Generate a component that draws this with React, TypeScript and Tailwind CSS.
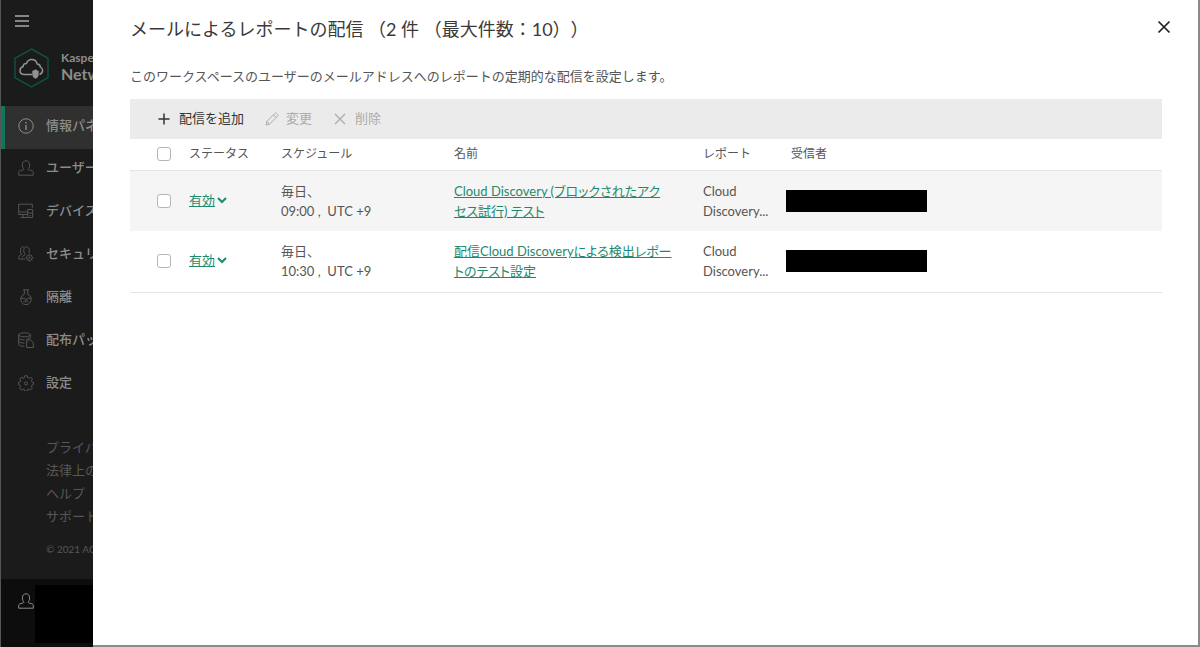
import { useState } from 'react';
import type { ReactNode } from 'react';

type MenuItem = {
  label: string;
  icon: ReactNode;
};

type Delivery = {
  id: number;
  time: string;
  name: string;
  report: string;
};

const menu: MenuItem[] = [
  {
    label: '情報パネル',
    icon: (
      <>
        <circle cx="8" cy="8" r="7.2" />
        <path d="M8 7v5M8 4v1.4" strokeWidth="1.4" />
      </>
    ),
  },
  { label: 'ユーザー', icon: <UserPath /> },
  {
    label: 'デバイス',
    icon: <path d="M9 11.5H.7V1.2h13.6v3.6M.7 9H9M5 11.5v3M2.5 14.5H9M9.7 6.5h5v8h-5zM9.7 10h5M12.2 12v1" />,
  },
  {
    label: 'セキュリティ',
    icon: (
      <>
        <path d="M7 13H.7c0-2.400.4-3.400 1.800-4l1.200-.6C2.600 7.300 2.200 5.200 2.600 3.500 3 1.800 3.900.8 5.200.8c.5 0 .9.1 1.300.4M6.200 9.300 7 8.700V8C5.900 7 5.500 5 5.900 3.400 6.300 1.700 7.300.8 8.600.8s2.200.9 2.600 2.600c.3 1.200.1 2.500-.4 3.500M6.200 9.300c-1.200.4-1.700 1-1.700 2.200" />
        <circle cx="11.500" cy="11.700" r="2.800" />
        <circle cx="11.500" cy="11.700" r=".7" />
        <path d="M11.500 7.700v1M11.500 14.700v1M7.500 11.700h1M14.500 11.700h1M8.700 8.900l.7.7M13.600 13.800l.7.7M14.300 8.900l-.7.7M8.700 14.500l.7-.7" />
      </>
    ),
  },
  {
    label: '隔離',
    icon: (
      <>
        <path d="M5 .8h6M6.300.8v4.500a5.300 5.300 0 1 0 3.400 0V.8M2.800 9.200h3.400l1.800 1.500 1.800-1.500h3.400" />
        <path d="M8 10.700v3M5.500 13l1.200-1.500M10.500 13l-1.200-1.500" />
      </>
    ),
  },
  {
    label: '配布パッケージ',
    icon: (
      <>
        <ellipse cx="6.500" cy="2.800" rx="5.800" ry="2" />
        <path d="M.7 2.800v9.600c0 1 2.300 1.900 5.800 1.900M12.300 2.800v3.400M.7 6c0 1.100 2.600 1.900 5.800 1.900M.7 9.200c0 1.100 2.600 1.900 5.800 1.900M12.300 5.500c-.5.800-2 1.400-4 1.600" />
        <path d="M8.700 8h4l2.600 2.500v5H8.700z" />
      </>
    ),
  },
  {
    label: '設定',
    icon: (
      <>
        <path d="M6.700.8h2.600l.4 1.900 1.300.6 1.700-1.100 1.800 1.900-1.100 1.600.5 1.300 1.500.3v2.500l-1.700.5-.5 1.200 1.100 1.700-1.900 1.900-1.600-1.100-1.200.5-.4 1.700H6.700l-.4-1.700-1.300-.5-1.600 1.100-1.800-1.900 1-1.600-.5-1.300L.6 9.800V7.300l1.600-.4.5-1.200-1-1.700 1.800-1.800L5 3.200l1.300-.5z" />
        <circle cx="8" cy="8.500" r="1.500" />
      </>
    ),
  },
];

const links = ['プライバシー', '法律上の情報', 'ヘルプ', 'サポート'];

const deliveries: Delivery[] = [
  { id: 1, time: '09:00 ,  UTC +9', name: 'Cloud Discovery (ブロックされたアク\nセス試行) テスト', report: 'Cloud Discovery...' },
  { id: 2, time: '10:30 ,  UTC +9', name: '配信Cloud Discoveryによる検出レポー\nトのテスト設定', report: 'Cloud Discovery...' },
];

function UserPath() {
  return (
    <path d="M6 9.200C4.900 8.200 4.400 6.600 4.400 4.900 4.400 2.300 5.900.8 8 .8s3.600 1.500 3.600 4.100c0 1.700-.5 3.300-1.600 4.300.3.600.8.8 1.600 1l2.200.5c1.100.3 1.500 1 1.500 2v2.500H.7v-2.500c0-1 .4-1.700 1.500-2l2.200-.5c.8-.2 1.300-.4 1.600-1z" />
  );
}

function Icon({ children, className }: { children: ReactNode; className?: string }) {
  return (
    <svg viewBox="0 0 16 16" fill="none" stroke="currentColor" className={`size-4 shrink-0 ${className ?? ''}`}>
      {children}
    </svg>
  );
}

function Sidebar() {
  return (
    <aside className="flex w-[93px] shrink-0 flex-col overflow-hidden whitespace-nowrap border-l border-[#555] bg-[#1b1b1b] text-[#8c8c8c]">
      <button aria-label="メニュー" className="mt-[15px] ml-[14px] flex h-3 w-[14px] flex-col justify-between">
        <span className="h-[2px] w-full bg-[#858585]" />
        <span className="h-[2px] w-full bg-[#858585]" />
        <span className="h-[2px] w-full bg-[#858585]" />
      </button>

      <div className="mt-[21px] mb-[18px] ml-[13px] flex h-10 items-center gap-3">
        <svg viewBox="0 0 35 40" fill="none" className="h-10 w-[35px] shrink-0">
          <path d="M17.500 1 34 10.300v19.400L17.500 39 1 29.700V10.300z" stroke="#0c5144" strokeWidth="1.500" />
          <path
            d="M18 26.500h-7.500C7.700 26.500 6 24.800 6 22.500c0-2 1.300-3.500 3.200-4-.1-2 1.400-3.300 3.300-3.100.7-2.600 2.700-4 5.200-4 2.900 0 4.900 1.700 5.400 4.500 2 .1 3.200 1.300 3.200 3.200 1.500.6 2.300 1.700 2.300 3.200 0 2-1.200 3.600-3.100 4.100"
            stroke="#929292"
            strokeWidth="1.500"
          />
          <path d="M18.300 23c1.200-.3 2.200-.9 3.200-1.800 1 .9 2 1.500 3.200 1.800v3.200c0 2-1.200 3.600-3.200 4.600-2-1-3.200-2.600-3.200-4.600z" fill="#929292" />
        </svg>
        <div className="pb-1 font-['Lato'] font-bold">
          <div className="text-xs leading-4">Kaspersky</div>
          <div className="text-base leading-4">Network</div>
        </div>
      </div>

      <nav>
        {menu.map((item, i) => (
          <a
            key={item.label}
            href="#"
            className={`flex h-[43px] items-center gap-3 border-l-4 pl-[13px] text-[13px] font-medium ${
              i === 0 ? 'border-[#12765f] bg-[#303030] pb-1' : 'border-transparent pb-[6px]'
            }`}
          >
            <Icon className={i === 0 ? 'text-[#8c8c8c]' : 'text-[#555]'}>{item.icon}</Icon>
            {item.label}
          </a>
        ))}
      </nav>

      <div className="mt-[29px] ml-[45px] flex flex-col text-[13px] leading-[23px] text-[#585858]">
        {links.map((l) => (
          <a key={l} href="#">{l}</a>
        ))}
        <span className="mt-[10px] font-['Lato'] text-[10px]">© 2021 AO Kaspersky Lab</span>
      </div>

      <div className="mt-auto flex h-[68px] bg-[#0d0d0d] pt-[6px] pl-[17px]">
        <Icon className="mt-2 mr-px text-[#8c8c8c]">
          <UserPath />
        </Icon>
        <div className="h-[58px] flex-1 bg-black" />
      </div>
    </aside>
  );
}

function Checkbox({ label, checked, onChange }: { label: string; checked: boolean; onChange: () => void }) {
  return (
    <input
      type="checkbox"
      aria-label={label}
      checked={checked}
      onChange={onChange}
      className="ml-[27px] block size-[14px] appearance-none rounded-[3px] border border-[#b5b5b5] bg-white checked:bg-[#1d8a6e]"
    />
  );
}

export default function App() {
  const [selected, setSelected] = useState<number[]>([]);

  const toggle = (id: number) => {
    setSelected(selected.includes(id) ? selected.filter((s) => s !== id) : [...selected, id]);
  };

  const toggleAll = () => {
    setSelected(selected.length === deliveries.length ? [] : deliveries.map((d) => d.id));
  };

  return (
    <div className="flex min-h-screen font-['Lato','Noto_Sans_CJK_JP',sans-serif]">
      <Sidebar />

      <main className="min-w-0 flex-1 border-r-2 border-b-2 border-[#8a8a8a] bg-white pr-9 pl-[37px] text-[#555]">
        <header className="-mr-[10px] flex items-start justify-between pt-[15px]">
          <h1 className="text-lg leading-7 text-[#3a3a3a] [text-spacing-trim:space-all]">
            メールによるレポートの配信 （2 件 （最大件数：10））
          </h1>
          <button aria-label="閉じる" className="pt-1 text-[#222]">
            <Icon>
              <path d="M2.500 2.500l11 11M13.500 2.500l-11 11" strokeWidth="1.700" />
            </Icon>
          </button>
        </header>

        <p className="mt-[23px] text-[13px] leading-5">
          このワークスペースのユーザーのメールアドレスへのレポートの定期的な配信を設定します。
        </p>

        <div className="mt-[13px] flex h-10 items-center bg-[#ebebeb] pl-[26px] text-[13px] text-[#333]">
          <button className="mr-5 flex items-center gap-[7px]">
            <Icon>
              <path d="M8 2.500v11M2.500 8h11" strokeWidth="1.500" />
            </Icon>
            配信を追加
          </button>
          <button disabled={selected.length !== 1} className="mr-5 flex items-center gap-[6px] disabled:text-[#acacac]">
            <Icon>
              <path d="M2 14l.8-3.500 8-8c.6-.6 1.300-.6 1.900 0l.8.8c.6.6.6 1.300 0 1.900l-8 8zM9.500 3.800l2.700 2.700M2.800 10.500l2.700 2.700" />
            </Icon>
            変更
          </button>
          <button disabled={selected.length === 0} className="flex items-center gap-[7px] disabled:text-[#acacac]">
            <Icon>
              <path d="M3 3l10 10M13 3L3 13" strokeWidth="1.300" />
            </Icon>
            削除
          </button>
        </div>

        <table className="w-full table-fixed text-left text-[13px] leading-5">
          <colgroup>
            <col className="w-[59px]" />
            <col className="w-[92px]" />
            <col className="w-[173px]" />
            <col className="w-[249px]" />
            <col className="w-[83px]" />
            <col />
          </colgroup>
          <thead>
            <tr className="h-[31px] border-b border-[#e0e5e8] text-xs">
              <th>
                <Checkbox label="すべて選択" checked={selected.length === deliveries.length} onChange={toggleAll} />
              </th>
              <th className="font-normal">ステータス</th>
              <th className="font-normal">スケジュール</th>
              <th className="font-normal">名前</th>
              <th className="font-normal">レポート</th>
              <th className="pl-[5px] font-normal">受信者</th>
            </tr>
          </thead>
          <tbody>
            {deliveries.map((d) => (
              <tr key={d.id} className="h-[61px] border-[#e0e5e8] odd:bg-[#f5f5f5] last:border-b">
                <td>
                  <Checkbox label={d.name} checked={selected.includes(d.id)} onChange={() => toggle(d.id)} />
                </td>
                <td className="pb-[2px]">
                  <button className="flex items-center gap-[2px] text-[#1d8a6e]">
                    <span className="underline underline-offset-1">有効</span>
                    <svg viewBox="0 0 10 10" fill="none" stroke="currentColor" strokeWidth="2" className="size-[10px]">
                      <path d="M1 3l4 4 4-4" />
                    </svg>
                  </button>
                </td>
                <td className="whitespace-pre">
                  毎日、
                  <br />
                  {d.time}
                </td>
                <td className="whitespace-pre-line">
                  <a href="#" className="text-[#1d8a6e] underline underline-offset-1 [font-feature-settings:'palt']">
                    {d.name}
                  </a>
                </td>
                <td className="pr-2">{d.report}</td>
                <td>
                  <div className="h-[22px] w-[141px] bg-black" />
                </td>
              </tr>
            ))}
          </tbody>
        </table>
      </main>
    </div>
  );
}
